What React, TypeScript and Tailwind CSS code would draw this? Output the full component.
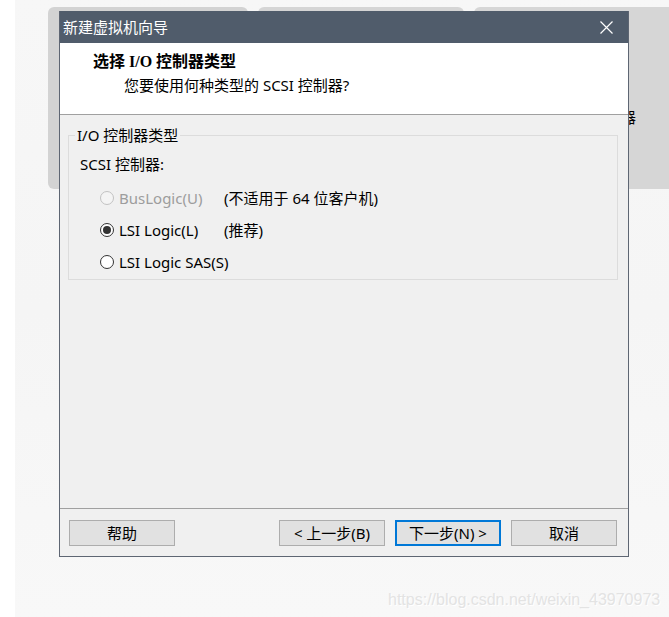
const ui = "font-['Noto_Sans','Noto_Sans_CJK_SC',sans-serif]";

function Radio({ checked, disabled }: { checked?: boolean; disabled?: boolean }) {
  return (
    <span
      className={
        "flex h-[14px] w-[14px] shrink-0 items-center justify-center rounded-full border " +
        (disabled ? "border-[#c2c2c2] bg-[#f4f4f4]" : "border-[#333333] bg-white")
      }
    >
      {checked && <span className="h-[8px] w-[8px] rounded-full bg-[#333333]" />}
    </span>
  );
}

function Btn({ label, focused }: { label: string; focused?: boolean }) {
  return (
    <button
      className={
        "flex h-[26px] w-[106px] items-center justify-center bg-[#e1e1e1] text-[15px] leading-none text-black " +
        (focused ? "border-2 border-[#0078d7]" : "border border-[#adadad]")
      }
    >
      {label}
    </button>
  );
}

export default function App() {
  return (
    <div className={"relative h-[617px] w-[669px] overflow-hidden bg-white " + ui}>
      {/* desktop behind the wizard */}
      <div className="ml-[15px] h-full bg-gradient-to-b from-[#f7f7f7] via-[#f5f5f5] to-[#f8f8f8] pt-[7px]">
        <div className="ml-[33px] flex h-[182px] gap-[10px]">
          <div className="w-[200px] rounded-t-[6px] rounded-bl-[6px] bg-[#d3d3d3]" />
          <div className="w-[206px] rounded-t-[6px] bg-[#d5d5d5]" />
          <div className="relative flex-1 rounded-tl-[6px] bg-[#d6d6d6]">
            <span className="absolute left-[147px] top-[99px] text-[15px] text-black">器</span>
          </div>
        </div>
      </div>

      <div className="absolute left-[388px] top-[588px] font-['Liberation_Sans',sans-serif] text-[16px] text-[#e3e3e3] [text-shadow:1px_1px_0_#ffffff]">
        https://blog.csdn.net/weixin_43970973
      </div>

      {/* wizard window */}
      <div className="absolute left-[59px] top-[11px] flex h-[546px] w-[570px] flex-col border-x border-b border-[#5e6673] bg-[#f0f0f0]">
        <div className="flex h-[32px] shrink-0 items-center justify-between bg-[#505c6b] pl-[3px] pr-[15px]">
          <span className="text-[15px] leading-none text-white">新建虚拟机向导</span>
          <svg width="13" height="13" viewBox="0 0 13 13" className="text-white">
            <path d="M0.5 0.5 L12.5 12.5 M12.5 0.5 L0.5 12.5" stroke="currentColor" strokeWidth="1.2" />
          </svg>
        </div>

        <div className="h-[72px] shrink-0 border-b border-[#a0a0a0] bg-white pt-[9px]">
          <div className="pl-[33px] text-[16px] font-bold leading-[20px] text-black font-['Liberation_Serif','Noto_Sans_CJK_SC',serif]">
            选择 I/O 控制器类型
          </div>
          <div className="mt-[3px] pl-[64px] text-[15px] leading-[20px] text-black">
            您要使用何种类型的 SCSI 控制器?
          </div>
        </div>

        <div className="flex-1">
          <fieldset className="ml-[8px] mt-[10px] w-[550px] border border-[#dcdcdc] pb-[1px]">
            <legend className="ml-[6px] px-[2px] text-[15px] leading-[20px] text-black">I/O 控制器类型</legend>
            <div className="mt-[9px] pl-[11px] text-[15px] leading-[20px] text-black">SCSI 控制器:</div>
            <div className="mt-[8px] flex flex-col pl-[31px] text-[15px] leading-[20px]">
              <div className="flex h-[32px] items-center">
                <div className="flex w-[124px] items-center gap-[5px]">
                  <Radio disabled />
                  <span className="text-[#9d9d9d]">BusLogic(U)</span>
                </div>
                <span className="text-black">(不适用于 64 位客户机)</span>
              </div>
              <div className="flex h-[32px] items-center">
                <div className="flex w-[124px] items-center gap-[5px]">
                  <Radio checked />
                  <span className="text-black">LSI Logic(L)</span>
                </div>
                <span className="text-black">(推荐)</span>
              </div>
              <div className="flex h-[32px] items-center">
                <div className="flex items-center gap-[5px]">
                  <Radio />
                  <span className="text-black">LSI Logic SAS(S)</span>
                </div>
              </div>
            </div>
          </fieldset>
        </div>

        <div className="flex h-[48px] shrink-0 items-start border-t border-[#a0a0a0] pl-[9px] pr-[11px] pt-[11px]">
          <Btn label="帮助" />
          <div className="ml-auto flex gap-[10px]">
            <Btn label="< 上一步(B)" />
            <Btn label="下一步(N) >" focused />
            <Btn label="取消" />
          </div>
        </div>
      </div>
    </div>
  );
}
